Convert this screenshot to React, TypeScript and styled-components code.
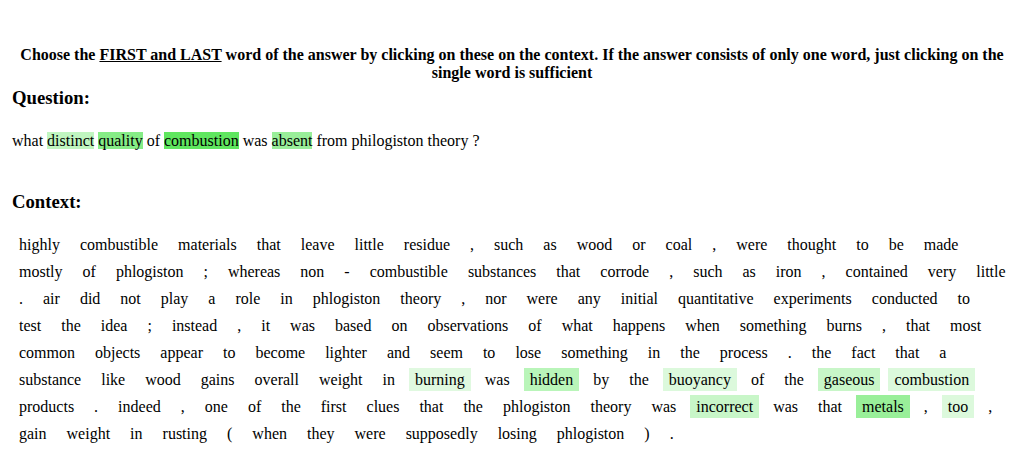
import React from "react";
import styled, { createGlobalStyle } from "styled-components";

const GlobalStyle = createGlobalStyle`
  html, body { margin: 0; padding: 0; background: #ffffff; }
  body { font-family: "Liberation Serif", "Times New Roman", serif; color: #000; }
`;

const Page = styled.div`
  display: flow-root;
  padding: 0 8px;
`;

const Instruction = styled.p`
  margin: 46px 0 0;
  font-size: 16px;
  line-height: 18px;
  font-weight: bold;
  text-align: center;
`;

const Under = styled.span`
  text-decoration: underline;
`;

const Heading = styled.h3<{ $top: number }>`
  margin: ${(p) => p.$top}px 0 0 4px;
  font-size: 18.72px;
  line-height: 22px;
  font-weight: bold;
`;

const QuestionText = styled.div`
  margin: 23px 0 0 4px;
  font-size: 16px;
  line-height: 18px;
`;

const QWord = styled.span<{ $bg?: string }>`
  background: ${(p) => p.$bg || "transparent"};
`;

const WordGrid = styled.div`
  margin: 20px 0 0 5px;
  display: flex;
  flex-wrap: wrap;
  column-gap: 8px;
  row-gap: 4px;
`;

const Word = styled.span<{ $bg?: string }>`
  display: inline-block;
  padding: 3px 6px;
  font-size: 16px;
  line-height: 17px;
  background: ${(p) => p.$bg || "transparent"};
  cursor: pointer;
`;

const levels: Record<string, string> = {
  "1": "#dcf9dc",
  "2": "#c8f6c8",
  "3": "#b9f5b9",
  "4": "#99ef99",
  "0": "#e0f9e0",
};

const contextText =
  "highly combustible materials that leave little residue , such as wood or coal , were thought to be made " +
  "mostly of phlogiston ; whereas non - combustible substances that corrode , such as iron , contained very little " +
  ". air did not play a role in phlogiston theory , nor were any initial quantitative experiments conducted to " +
  "test the idea ; instead , it was based on observations of what happens when something burns , that most " +
  "common objects appear to become lighter and seem to lose something in the process . the fact that a " +
  "substance like wood gains overall weight in burning|0 was hidden|3 by the buoyancy|1 of the gaseous|2 combustion|1 " +
  "products . indeed , one of the first clues that the phlogiston theory was incorrect|2 was that metals|4 , too|1 , " +
  "gain weight in rusting ( when they were supposedly losing phlogiston ) .";

const words = contextText.split(" ").map((w) => {
  const [text, lvl] = w.split("|");
  return { text, bg: lvl !== undefined ? levels[lvl] : undefined };
});

const question: { text: string; bg?: string }[] = [
  { text: "what" },
  { text: "distinct", bg: "#c0f5c0" },
  { text: "quality", bg: "#86ec86" },
  { text: "of" },
  { text: "combustion", bg: "#5fe65f" },
  { text: "was" },
  { text: "absent", bg: "#99ee99" },
  { text: "from" },
  { text: "philogiston" },
  { text: "theory" },
  { text: "?" },
];

export default function App() {
  return (
    <Page>
      <GlobalStyle />
      <Instruction>
        Choose the <Under>FIRST and LAST</Under> word of the answer by clicking on these on the context. If the
        answer consists of only one word, just clicking on the single word is sufficient
      </Instruction>
      <Heading $top={5}>Question:</Heading>
      <QuestionText>
        {question.map((q, i) => (
          <React.Fragment key={i}>
            <QWord $bg={q.bg}>{q.text}</QWord>
            {i < question.length - 1 ? " " : ""}
          </React.Fragment>
        ))}
      </QuestionText>
      <Heading $top={41}>Context:</Heading>
      <WordGrid>
        {words.map((w, i) => (
          <Word key={i} $bg={w.bg}>
            {w.text}
          </Word>
        ))}
      </WordGrid>
    </Page>
  );
}
